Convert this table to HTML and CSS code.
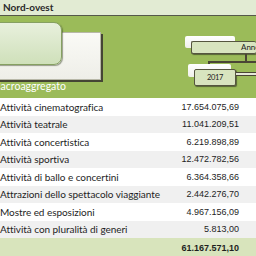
FILE: index.html
```html
<!DOCTYPE html>
<html>
<head>
<meta charset="utf-8">
<link rel="stylesheet" href="styles.css">
</head>
<body>
<div class="page">
  <div class="topbar">Nord-ovest</div>
  <div class="canvas">
    <div class="card card-back"></div>
    <div class="card card-front"></div>
    <div class="node-shadow anno-shadow"></div>
    <div class="node anno"><span>Anno</span></div>
    <div class="line l-anno-down"></div>
    <div class="line l-horiz"></div>
    <div class="line l-2017-up"></div>
    <div class="node-shadow y-shadow"></div>
    <div class="node y2017">2017</div>
    <div class="dline"></div>
  </div>
  <div class="thead"><span class="thead-label">Macroaggregato</span></div>
  <div class="rows">
    <div class="row"><span class="lbl">Attività cinematografica</span><span class="num">17.654.075,69</span></div>
    <div class="row alt"><span class="lbl">Attività teatrale</span><span class="num">11.041.209,51</span></div>
    <div class="row"><span class="lbl">Attività concertistica</span><span class="num">6.219.898,89</span></div>
    <div class="row alt"><span class="lbl">Attività sportiva</span><span class="num">12.472.782,56</span></div>
    <div class="row"><span class="lbl">Attività di ballo e concertini</span><span class="num">6.364.358,66</span></div>
    <div class="row alt"><span class="lbl">Attrazioni dello spettacolo viaggiante</span><span class="num">2.442.276,70</span></div>
    <div class="row"><span class="lbl">Mostre ed esposizioni</span><span class="num">4.967.156,09</span></div>
    <div class="row alt"><span class="lbl">Attività con pluralità di generi</span><span class="num">5.813,00</span></div>
    <div class="row total"><span class="lbl"></span><span class="num">61.167.571,10</span></div>
  </div>
</div>
</body>
</html>
```
FILE: styles.css
```css
html, body {
  margin: 0;
  padding: 0;
  background: #ffffff;
}
.page {
  width: 256px;
  height: 256px;
  overflow: hidden;
  font-family: Lato, "Open Sans", sans-serif;
  color: #222;
}
.topbar {
  height: 15px;
  background: #e2ebd3;
  border-bottom: 1px solid #55584a;
  font-size: 10px;
  font-weight: bold;
  line-height: 15px;
  padding-left: 3px;
  color: #2a2a2a;
}
.canvas {
  position: relative;
  z-index: 1;
  height: 64px;
  background: #9bbb59;
}
.card {
  position: absolute;
}
.card-back {
  left: -10px;
  top: 16px;
  width: 109px;
  height: 46px;
  background: linear-gradient(#fafaf6, #eeeee8);
  border: 1px solid #b8b8a8;
  box-shadow: 2px 2px 0 #454535;
}
.card-front {
  left: -10px;
  top: 6px;
  width: 70px;
  height: 41px;
  border-radius: 8px;
  background: linear-gradient(#e8f0dd, #cfe0ba);
  border: 1px solid #86a062;
  box-shadow: 1px 1px 1px rgba(60, 70, 40, 0.5);
}
.node-shadow {
  position: absolute;
  background: linear-gradient(#ffffff, #f0f0ea);
  border-radius: 2px;
}
.node {
  position: absolute;
  background: #d8e4bf;
  border: 1px solid #55553f;
  border-radius: 2px;
  box-shadow: 1px 1px 1px rgba(40, 40, 30, 0.6);
  font-size: 8px;
  color: #222;
  box-sizing: border-box;
}
.anno-shadow {
  left: 185px;
  top: 20px;
  width: 50px;
  height: 12px;
}
.anno {
  left: 191px;
  top: 25px;
  width: 65px;
  height: 13px;
  line-height: 11px;
  padding-left: 49px;
  border-right: none;
  white-space: nowrap;
  overflow: hidden;
}
.y-shadow {
  left: 188px;
  top: 48px;
  width: 43px;
  height: 13px;
}
.y2017 {
  left: 194px;
  top: 53px;
  width: 42px;
  height: 17px;
  line-height: 15px;
  text-align: center;
  font-size: 7.5px;
  letter-spacing: -0.4px;
}
.line {
  position: absolute;
  background: #4a4535;
}
.l-anno-down {
  left: 245px;
  top: 38px;
  width: 2px;
  height: 8px;
}
.l-horiz {
  left: 208px;
  top: 45px;
  width: 48px;
  height: 2px;
}
.l-2017-up {
  left: 208px;
  top: 45px;
  width: 2px;
  height: 6px;
}
.dline {
  position: absolute;
  left: 236px;
  top: 56px;
  width: 20px;
  height: 2px;
  background: #e6e9d8;
  border-top: 1px solid #4a4535;
  border-bottom: 1px solid #4a4535;
}
.thead {
  height: 18px;
  background: #9bbb59;
  overflow: hidden;
}
.thead-label {
  display: block;
  margin-left: -9px;
  font-size: 10.5px;
  line-height: 12px;
  color: #ffffff;
}
.rows {
  display: flex;
  flex-direction: column;
}
.row {
  display: flex;
  align-items: center;
  justify-content: space-between;
  height: 17.5px;
  padding-right: 17px;
  background: #ffffff;
  white-space: nowrap;
}
.row.alt {
  background: #f0f0f0;
}
.row.total {
  height: 20px;
  background: #d8e4bc;
}
.lbl {
  font-size: 10px;
  letter-spacing: -0.05px;
  color: #1e1e1e;
}
.num {
  font-family: "Liberation Sans", Arial, sans-serif;
  font-size: 9px;
  color: #1e1e1e;
}
.total .num {
  font-weight: bold;
}
```
